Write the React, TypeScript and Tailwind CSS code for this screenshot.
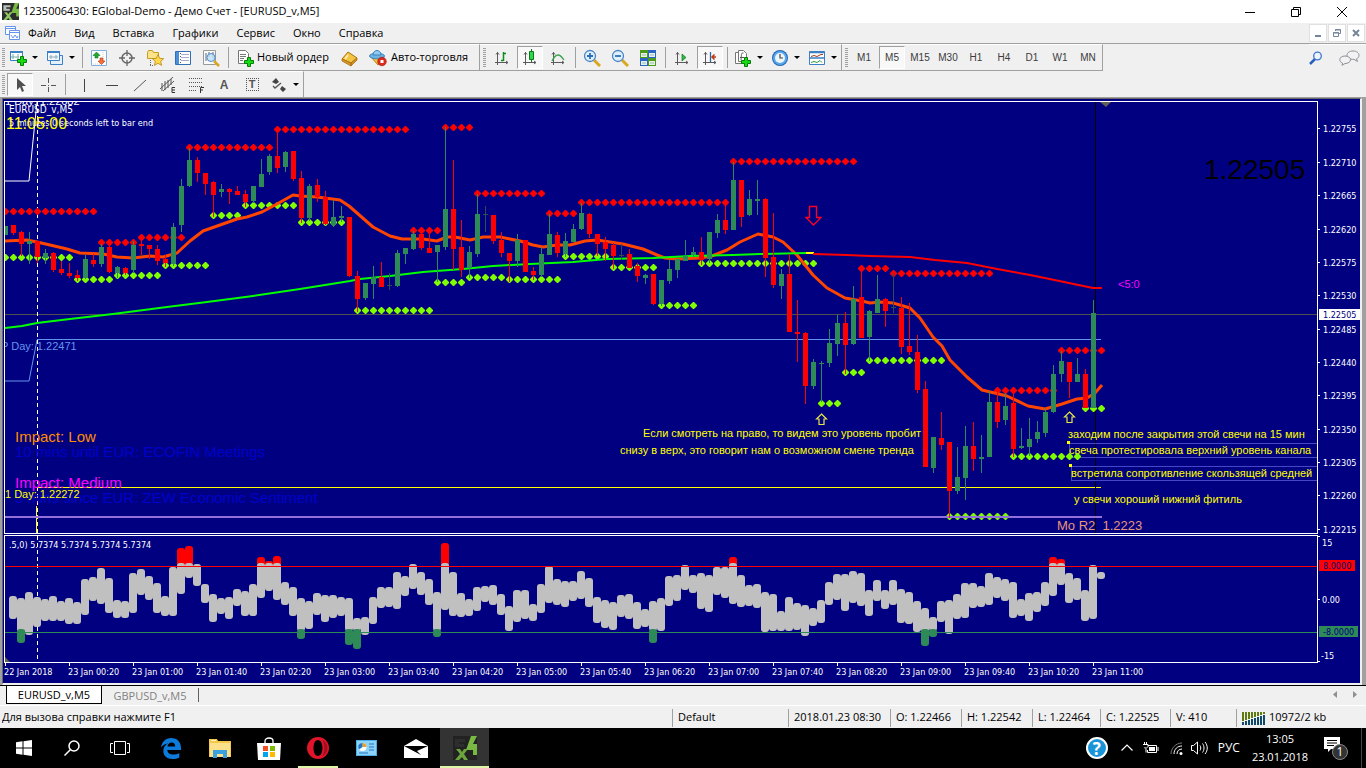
import type { ReactNode } from "react";
import clsx from "clsx";

type Candle = [high: number, top: number, bottom: number, low: number, kind: "u" | "d" | "n"];

// One entry per 5 minute bar, 8px apart
const CANDLES: Candle[] = [
  [226, 226, 235, 235, "u"], [225, 225, 233, 235, "d"], [231, 232, 244, 256, "d"], [232, 241, 244, 264, "u"],
  [241, 241, 257, 263, "d"], [249, 253, 258, 264, "u"], [252, 253, 270, 272, "d"], [261, 269, 273, 275, "d"],
  [263, 273, 276, 278, "d"], [270, 275, 278, 281, "d"], [255, 259, 278, 279, "u"], [254, 260, 264, 267, "d"],
  [244, 247, 264, 267, "u"], [246, 247, 272, 273, "d"], [266, 267, 273, 278, "u"], [267, 268, 273, 275, "d"],
  [241, 245, 270, 273, "u"], [239, 244, 246, 255, "d"], [245, 245, 249, 259, "d"], [245, 249, 261, 265, "d"],
  [255, 259, 263, 267, "d"], [223, 227, 264, 266, "u"], [179, 186, 225, 232, "u"], [148, 160, 186, 187, "u"],
  [157, 160, 173, 182, "d"], [173, 173, 184, 195, "d"], [181, 182, 195, 217, "d"], [184, 189, 192, 197, "u"],
  [188, 189, 192, 204, "d"], [186, 191, 195, 195, "d"], [190, 194, 202, 207, "d"], [186, 186, 201, 203, "u"],
  [159, 174, 187, 187, "u"], [154, 156, 172, 175, "u"], [131, 156, 168, 173, "d"], [151, 152, 167, 172, "u"],
  [151, 151, 179, 181, "d"], [171, 178, 218, 223, "d"], [184, 186, 218, 221, "u"], [179, 185, 197, 202, "d"],
  [191, 197, 224, 225, "d"], [200, 217, 225, 227, "u"], [206, 216, 218, 222, "u"], [217, 217, 276, 277, "d"],
  [271, 276, 299, 312, "d"], [283, 283, 298, 300, "u"], [266, 277, 284, 299, "u"], [262, 277, 287, 287, "d"],
  [273, 285, 286, 290, "n"], [250, 253, 286, 287, "u"], [248, 248, 254, 264, "u"], [231, 234, 249, 250, "u"],
  [232, 234, 248, 250, "d"], [231, 248, 253, 253, "d"], [245, 245, 252, 282, "u"], [127, 209, 247, 250, "u"],
  [160, 209, 249, 270, "d"], [220, 247, 270, 277, "d"], [246, 252, 268, 278, "u"], [194, 214, 254, 257, "u"],
  [206, 214, 215, 232, "n"], [215, 215, 241, 244, "d"], [232, 240, 253, 257, "d"], [253, 253, 261, 282, "d"],
  [234, 240, 261, 267, "u"], [240, 240, 272, 272, "d"], [267, 271, 275, 280, "d"], [247, 254, 275, 277, "u"],
  [214, 234, 255, 255, "u"], [232, 235, 253, 257, "d"], [233, 241, 254, 257, "u"], [224, 229, 242, 242, "u"],
  [203, 213, 229, 230, "u"], [213, 214, 234, 238, "d"], [234, 234, 244, 256, "d"], [237, 242, 249, 261, "d"],
  [243, 245, 256, 269, "d"], [244, 255, 256, 260, "n"], [249, 254, 268, 268, "d"], [263, 266, 276, 282, "d"],
  [274, 275, 278, 284, "u"], [274, 274, 304, 305, "d"], [280, 280, 304, 306, "u"], [260, 269, 281, 284, "u"],
  [259, 259, 270, 278, "u"], [240, 256, 261, 261, "u"], [247, 252, 255, 257, "u"], [237, 252, 260, 265, "d"],
  [232, 232, 259, 263, "u"], [214, 220, 233, 238, "u"], [206, 220, 230, 234, "d"], [162, 180, 230, 230, "u"],
  [180, 180, 217, 227, "d"], [190, 199, 215, 216, "u"], [180, 199, 201, 215, "u"], [198, 199, 258, 277, "d"],
  [213, 257, 285, 288, "d"], [269, 274, 286, 299, "u"], [254, 274, 332, 332, "d"], [300, 332, 334, 362, "d"],
  [332, 333, 386, 404, "d"], [359, 362, 386, 389, "u"], [361, 363, 364, 402, "u"], [329, 343, 363, 367, "u"],
  [315, 323, 344, 356, "u"], [312, 323, 345, 374, "d"], [286, 299, 344, 345, "u"], [268, 297, 338, 338, "d"],
  [310, 311, 337, 361, "u"], [275, 299, 313, 313, "u"], [298, 299, 311, 327, "d"], [273, 307, 308, 313, "n"],
  [297, 308, 347, 354, "d"], [303, 346, 352, 355, "d"], [335, 352, 390, 393, "d"], [381, 389, 467, 467, "d"],
  [437, 437, 468, 473, "u"], [412, 438, 445, 450, "d"], [442, 442, 491, 518, "d"], [447, 477, 491, 494, "u"],
  [426, 446, 478, 500, "u"], [422, 446, 459, 471, "d"], [435, 457, 459, 473, "u"], [391, 402, 457, 457, "u"],
  [392, 402, 422, 428, "d"], [393, 406, 420, 425, "u"], [394, 403, 449, 457, "d"], [428, 446, 448, 449, "u"],
  [418, 439, 447, 456, "u"], [421, 432, 439, 443, "u"], [408, 412, 433, 437, "u"], [365, 374, 412, 413, "u"],
  [351, 361, 374, 382, "u"], [362, 362, 382, 398, "d"], [358, 374, 382, 382, "u"], [369, 374, 408, 408, "d"],
  [300, 313, 408, 408, "u"],
];

const CANDLE_FILL = { u: "#2e8b57", d: "#ff0000", n: "#2f4f4f" };

// [first x, number of marks, y]
const RESISTANCE = [
  [5, 12, 211], [101, 5, 242], [141, 6, 237], [189, 11, 147], [277, 17, 129], [413, 4, 230], [445, 4, 127],
  [477, 9, 193], [549, 4, 213], [581, 19, 202], [733, 16, 161], [861, 4, 268], [893, 13, 273], [997, 8, 390],
  [1061, 6, 350],
];
const SUPPORT = [
  [5, 9, 257], [77, 5, 279], [117, 6, 275], [165, 6, 265], [213, 4, 215], [245, 7, 205], [301, 6, 222],
  [357, 10, 310], [437, 4, 282], [469, 5, 277], [509, 7, 279], [565, 6, 256], [613, 6, 267], [661, 5, 305],
  [701, 15, 263], [821, 3, 403], [845, 3, 372], [869, 10, 360], [949, 8, 516], [1013, 9, 456], [1085, 3, 408],
];

const FAST_MA =
  "5,241 27,240 37,242 50,245 67,249 80,253 103,254 117,257 133,258 150,256 163,257 177,253 190,241 203,231 220,225 237,219 247,217 262,212 277,204 293,195 300,196 317,197 340,200 349,206 365,220 373,227 390,236 402,239 423,239 437,241 447,237 455,237 470,240 483,237 500,237 520,241 533,245 543,247 557,245 570,245 585,241 597,240 623,244 643,249 657,255 665,258 677,259 700,258 712,256 727,250 740,242 758,234 773,237 783,242 797,255 813,275 827,288 845,298 862,301 870,303 880,302 893,303 910,308 920,318 933,337 942,346 950,360 960,370 967,377 982,390 1007,396 1028,406 1045,409 1062,404 1077,399 1087,398 1095,393 1102,385";
const SLOW_UP =
  "5,328 22,326 37,323 70,319 113,314 167,307 207,302 253,296 300,289 350,281 360,279 390,276 423,272 463,269 493,266 530,264 573,262 607,259 653,258 690,256 733,255 760,254 807,253";
const SLOW_DOWN =
  "813,254 847,255 870,256 910,257 935,260 967,263 997,269 1030,275 1040,277 1093,288 1102,288";

// Oscillator bars: [top, bottom, overshoot end if the bar leaves the +8/-8 band]
const OSC: number[][] = [
  [60, 83], [62, 96, 107], [56, 99], [61, 91], [63, 85], [60, 85], [65, 85], [62, 88], [66, 88], [43, 79],
  [41, 65], [32, 68], [42, 77], [64, 82], [65, 82], [37, 77], [33, 59], [40, 64], [47, 77], [60, 80],
  [31, 80], [27, 58, 12], [27, 42, 10], [28, 50], [48, 67], [58, 86], [62, 78], [61, 83], [53, 70], [55, 80],
  [48, 80], [27, 62, 21], [27, 55, 25], [27, 64, 20], [46, 69], [51, 80], [62, 95, 103], [65, 93], [57, 79], [59, 86],
  [59, 82], [61, 80], [62, 95, 109], [82, 95, 113], [81, 99], [61, 88], [51, 72], [51, 71], [36, 73], [40, 60],
  [28, 53], [36, 59], [43, 69], [56, 95, 101], [27, 74, 7], [36, 80], [57, 81], [63, 80], [51, 75], [50, 66],
  [49, 69], [58, 79], [70, 95], [54, 86], [54, 83], [68, 85], [48, 77], [30, 67], [43, 69], [45, 71],
  [45, 65], [35, 63], [42, 71], [61, 87], [64, 92], [66, 94], [59, 81], [58, 83], [66, 93], [73, 91],
  [65, 95, 107], [62, 95], [40, 70], [39, 65], [29, 54], [39, 57], [37, 73], [39, 76], [31, 59], [31, 62],
  [27, 68, 21], [39, 71], [49, 70], [48, 72], [56, 96], [58, 95], [75, 95], [61, 95], [67, 94], [69, 100],
  [72, 90], [64, 87], [46, 69], [38, 64], [38, 75], [35, 67], [37, 70], [54, 80], [44, 65], [54, 73],
  [44, 69], [53, 87], [56, 88], [65, 96], [72, 96, 110], [81, 95, 101], [65, 86], [64, 98], [58, 83], [47, 82],
  [47, 72], [50, 71], [37, 69], [41, 62], [43, 65], [46, 82], [63, 80], [57, 85], [56, 76], [46, 70],
  [27, 60, 21], [27, 49, 23], [37, 67], [42, 64], [54, 85], [29, 83], [36, 43],
];

const PRICES: [number, string][] = [
  [128, "1.22755"], [162, "1.22710"], [195, "1.22665"], [229, "1.22620"], [262, "1.22575"], [295, "1.22530"],
  [329, "1.22485"], [362, "1.22440"], [395, "1.22395"], [429, "1.22350"], [462, "1.22305"], [495, "1.22260"],
  [529, "1.22215"],
];

const TIMES = [
  "22 Jan 2018", "23 Jan 00:20", "23 Jan 01:00", "23 Jan 01:40", "23 Jan 02:20", "23 Jan 03:00", "23 Jan 03:40",
  "23 Jan 04:20", "23 Jan 05:00", "23 Jan 05:40", "23 Jan 06:20", "23 Jan 07:00", "23 Jan 07:40", "23 Jan 08:20",
  "23 Jan 09:00", "23 Jan 09:40", "23 Jan 10:20", "23 Jan 11:00",
];

const MENU = ["Файл", "Вид", "Вставка", "Графики", "Сервис", "Окно", "Справка"];
const PERIODS = ["M1", "M5", "M15", "M30", "H1", "H4", "D1", "W1", "MN"];

const AXIS_FONT = "font-['DejaVu_Sans_Condensed',sans-serif] text-[9px]";

/* ---------- small building blocks ---------- */

function Icon({ children, size = 18 }: { children: ReactNode; size?: number }) {
  return (
    <svg width={size} height={size} viewBox="0 0 18 18" fill="none" className="shrink-0">
      {children}
    </svg>
  );
}

function ToolButton({
  label,
  active,
  menu,
  children,
}: {
  label: string;
  active?: boolean;
  menu?: boolean;
  children: ReactNode;
}) {
  return (
    <button
      type="button"
      aria-label={label}
      className={clsx("flex h-6 shrink-0 items-center justify-center", menu ? "w-[37px] gap-[5px]" : "w-7")}
    >
      {active ? (
        <span className="flex h-[23px] w-[26px] items-center justify-center border border-t-[#a0a0a0] border-r-white border-b-white border-l-[#a0a0a0] bg-[#f8f8f8]">
          {children}
        </span>
      ) : (
        children
      )}
      {menu && (
        <svg width="6" height="3" className="shrink-0">
          <path d="M0 0h6L3 3z" fill="#000" />
        </svg>
      )}
    </button>
  );
}

function Grip() {
  return (
    <span className="flex h-[19px] w-[3px] shrink-0 flex-col justify-between">
      {Array.from({ length: 10 }, (_, i) => (
        <i key={i} className="block h-px w-[3px] bg-[#a0a0a0]" />
      ))}
    </span>
  );
}

function Divider() {
  return (
    <span className="flex w-[6px] shrink-0 justify-center">
      <i className="block h-[21px] w-px bg-[#a0a0a0]" />
    </span>
  );
}

function Plus({ x, y }: { x: number; y: number }) {
  return (
    <path
      transform={`translate(${x} ${y})`}
      d="M3.5.5h3v3h3v3h-3v3h-3v-3h-3v-3h3z"
      fill="#16dc16"
      stroke="#067d06"
    />
  );
}

function Axes() {
  return <path d="M4.500 3v13M2 13.500h13M3 5.500l1.500-2 1.500 2M13 12l2 1.500-2 1.500" stroke="#5a5a5a" />;
}

function Logo({ size, dark }: { size: number; dark?: boolean }) {
  return (
    <svg width={size} height={size} viewBox="0 0 24 24" className="shrink-0">
      <rect width="24" height="24" fill={dark ? "#222" : "#2c2c2c"} />
      <path d="M2 3h10v3H6v2h5v3H2z" fill={dark ? "#2e2e2e" : "#b9c0b9"} />
      <path d="M18 0h6l-4 8h4v11h-4v-5h-7z" fill="#79b843" />
      <path d="M3 13h4l2 3 2-3h4l-4 5 4 6h-4l-2-3-3 3H2l5-6z" fill={dark ? "#6aa53d" : "#8fc763"} />
    </svg>
  );
}

/* ---------- window chrome ---------- */

function TitleBar() {
  return (
    <header className="flex h-[23px] shrink-0 items-center bg-white pr-px pl-[2px]">
      <Logo size={17} />
      <h1 className="ml-1">1235006430: EGlobal-Demo - Демо Счет - [EURUSD_v,M5]</h1>
      <div className="ml-auto flex">
        <button type="button" aria-label="Свернуть" className="flex h-[23px] w-[46px] items-center justify-center">
          <svg width="10" height="10"><path d="M0 5.500h10" stroke="#000" /></svg>
        </button>
        <button type="button" aria-label="Развернуть" className="flex h-[23px] w-[46px] items-center justify-center">
          <svg width="10" height="10" fill="none" stroke="#000"><path d="M.5 2.500h7v7h-7zM2.500 2.500v-2h7v7h-2" /></svg>
        </button>
        <button type="button" aria-label="Закрыть" className="flex h-[23px] w-[46px] items-center justify-center">
          <svg width="10" height="10" stroke="#000"><path d="M0 0l10 10M10 0L0 10" /></svg>
        </button>
      </div>
    </header>
  );
}

function MenuBar() {
  return (
    <nav className="flex h-5 shrink-0 items-center pl-[5px]">
      <svg width="15" height="15" fill="#fff" stroke="#6495ed" className="mr-2">
        <path d="M.5.5h10v8H.5z" /><path d="M.5 2.500h10M4.500 4.500h10v9h-10zM4.500 6.500h10" />
        <path d="M6 9l2 3 2-3 2 3 1-2" fill="none" />
      </svg>
      <div className="flex gap-[18px]">
        {MENU.map((item) => (
          <button key={item} type="button" className="leading-5">{item}</button>
        ))}
      </div>
      <div className="ml-auto flex gap-px pr-px">
        <button type="button" aria-label="Свернуть график" className="flex size-[18px] items-center justify-center border border-[#e0e0e0] bg-white">
          <svg width="10" height="10"><path d="M2 8h6" stroke="#75869a" strokeWidth="2" /></svg>
        </button>
        <button type="button" aria-label="Восстановить график" className="flex size-[18px] items-center justify-center border border-[#e0e0e0] bg-white">
          <svg width="10" height="10" fill="none" stroke="#75869a"><path d="M1.500 4.500h5v4h-5zM1 5h6M3.500 3V1.500h5v4H7M3 2h6" /></svg>
        </button>
        <button type="button" aria-label="Закрыть график" className="flex size-[18px] items-center justify-center border border-[#e0e0e0] bg-white">
          <svg width="10" height="10"><path d="M2 2l6 6M8 2L2 8" stroke="#75869a" strokeWidth="2" /></svg>
        </button>
      </div>
    </nav>
  );
}

function MainToolbar() {
  return (
    <div className="flex h-7 shrink-0 border-t border-[#a0a0a0]">
      <div className="flex items-center border-t border-r border-b border-t-white border-r-[#a0a0a0] border-b-[#a0a0a0] pl-[2px]">
        <Grip />
        <div className="flex items-center">
          <ToolButton label="Новый график" menu>
            <Icon>
              <path d="M1.500 2.500h12v9h-12z" fill="#fff" stroke="#3b7fc4" /><path d="M1 3h13" stroke="#3b7fc4" strokeWidth="2" />
              <path d="M4 5v5M9 5v5M2 8h8" stroke="#7aa" />
              <Plus x={8} y={7} />
            </Icon>
          </ToolButton>
          <ToolButton label="Профили" menu>
            <Icon>
              <path d="M4.500 6.500h12v9h-12z" fill="#e4f0fb" stroke="#3b7fc4" />
              <path d="M1.500 2.500h12v9h-12z" fill="#f4f9fe" stroke="#3b7fc4" /><path d="M1 3h13" stroke="#3b7fc4" strokeWidth="2" />
              <path d="M3 8h9M5 6v4M10 6v4" stroke="#8ab" />
            </Icon>
          </ToolButton>
        </div>
        <Divider />
        <ToolButton label="Обзор рынка">
          <Icon>
            <path d="M1.500 1.500h15v15h-15z" fill="#fff" stroke="#7fb0e0" /><path d="M13 3v12M3 15h10" stroke="#ccc" strokeDasharray="1 1" />
            <path d="M6.500 3l3.500 3.500H8V9H5V6.500H3z" fill="#1fa82f" stroke="#0b7a18" strokeWidth=".6" />
            <path d="M11.500 15.500L8 12h2V9h3v3h2z" fill="#f2703a" stroke="#b83a0b" strokeWidth=".6" />
          </Icon>
        </ToolButton>
        <ToolButton label="Окно данных">
          <Icon>
            <circle cx="9" cy="9" r="5" stroke="#666" strokeWidth="1.500" /><path d="M9 1v6M9 11v6M1 9h6M11 9h6" stroke="#666" strokeWidth="1.300" />
          </Icon>
        </ToolButton>
        <ToolButton label="Навигатор">
          <Icon>
            <path d="M1.500 3.500l1-2h4l1 2h5v6h-11z" fill="#fbe38a" stroke="#c79a20" /><path d="M4.500 11v6M4 16.500h4" stroke="#666" strokeDasharray="1 1" />
            <path d="M12 5.500l1.700 3.800 4 .4-3 2.700.9 4-3.600-2.100-3.600 2.100.9-4-3-2.700 4-.4z" fill="#ffd94a" stroke="#b98512" strokeWidth=".8" />
          </Icon>
        </ToolButton>
        <ToolButton label="Терминал">
          <Icon>
            <path d="M1.500 2.500h15v13h-15z" fill="#fff" stroke="#2f6fb5" /><path d="M2 3h3v12H2z" fill="#4a90d9" />
            <path d="M7 5.500h8M7 8.500h8M7 11.500h8" stroke="#aac" /><path d="M6.500 4v10" stroke="#555" strokeDasharray="1 2" />
          </Icon>
        </ToolButton>
        <ToolButton label="Тестер стратегий">
          <Icon>
            <path d="M1.500 1.500h12v14h-12z" fill="#fafafa" stroke="#999" /><path d="M4 4v8M7 3v5M11 3v6" stroke="#666" />
            <circle cx="9" cy="8.500" r="4" fill="#bfe0f8cc" stroke="#4a90d9" /><path d="M12 12l5 5" stroke="#d9a520" strokeWidth="2.500" />
          </Icon>
        </ToolButton>
        <Divider />
        <button type="button" className="ml-px flex h-6 w-[104px] items-center gap-[2px] pl-[5px] whitespace-nowrap">
          <Icon>
            <path d="M1.500 1.500h7l3 3v10h-10z" fill="#fff" stroke="#777" /><path d="M3 5.500h6M3 7.500h6M3 9.500h4M3 11.500h3" stroke="#777" />
            <Plus x={7} y={8} />
          </Icon>
          Новый ордер
        </button>
        <ToolButton label="MetaEditor">
          <Icon>
            <path d="M1 10l6-7 9 6-6 5z" fill="#f4c542" stroke="#a8700f" /><path d="M1 10v2l9 5v-3zM16 9v2l-6 6v-3z" fill="#d9962a" stroke="#a8700f" strokeWidth=".8" />
            <path d="M4 10l3-4" stroke="#fff3b0" strokeWidth="1.500" />
          </Icon>
        </ToolButton>
        <button type="button" className="flex h-6 w-[115px] items-center gap-1 pl-[5px] whitespace-nowrap">
          <Icon>
            <path d="M2 8l7 8 6-8z" fill="#f2c438" stroke="#b5841a" /><ellipse cx="8" cy="7" rx="7.500" ry="2.800" fill="#6cb4e4" stroke="#3c83b8" />
            <path d="M4 6c0-6 8-6 8 0z" fill="#8fcbf2" stroke="#3c83b8" />
            <circle cx="13" cy="12.500" r="4.300" fill="#dd2a1c" stroke="#a01208" strokeWidth=".6" /><path d="M11.500 11h3v3h-3z" fill="#fff" />
          </Icon>
          Авто-торговля
        </button>
      </div>

      <div className="flex items-center border-t border-r border-b border-t-white border-r-[#a0a0a0] border-b-[#a0a0a0] pl-[3px]">
        <Grip />
        <div className="w-[2px]" />
        <ToolButton label="Бары">
          <Icon><Axes /><path d="M10.500 3v9M10.500 4.500H13M8 11.500h2.500" stroke="#0c8a1c" strokeWidth="1.500" /></Icon>
        </ToolButton>
        <ToolButton label="Свечи" active>
          <Icon><Axes /><path d="M10.500 0v13" stroke="#0c7a1c" /><path d="M8.500 2.500h4v8h-4z" fill="#2fd84a" stroke="#0c7a1c" /></Icon>
        </ToolButton>
        <ToolButton label="Линия">
          <Icon><Axes /><path d="M3 12c2-4 4-6 6-6s4 2 6 5" stroke="#3da34d" strokeWidth="1.300" /></Icon>
        </ToolButton>
        <Divider />
        <ToolButton label="Увеличить">
          <Icon><path d="M11 11l6 6" stroke="#d8a820" strokeWidth="3" /><circle cx="7" cy="7" r="5.500" fill="#dff0fc" stroke="#4a86c5" strokeWidth="1.300" /><path d="M4 7h6M7 4v6" stroke="#2f70b5" strokeWidth="1.800" /></Icon>
        </ToolButton>
        <ToolButton label="Уменьшить">
          <Icon><path d="M11 11l6 6" stroke="#d8a820" strokeWidth="3" /><circle cx="7" cy="7" r="5.500" fill="#dff0fc" stroke="#4a86c5" strokeWidth="1.300" /><path d="M4 7h6" stroke="#2f70b5" strokeWidth="1.800" /></Icon>
        </ToolButton>
        <ToolButton label="Плитка">
          <Icon>
            <path d="M1 1h8v8H1zM9 9h8v8H9z" fill="#4c9a1c" /><path d="M9 1h8v8H9zM1 9h8v8H1z" fill="#2a66c8" />
            <path d="M2 4h6v4H2zM10 4h6v4h-6zM2 12h6v4H2zM10 12h6v4h-6z" fill="#e8f2e0" /><path d="M3 6h4M11 6h4M3 14h4M11 14h4" stroke="#9bc" />
          </Icon>
        </ToolButton>
        <Divider />
        <ToolButton label="Автопрокрутка">
          <Icon><Axes /><path d="M9 5l4 3.500L9 12z" fill="#2fb84a" stroke="#0c7a1c" strokeWidth=".7" /></Icon>
        </ToolButton>
        <ToolButton label="Сдвиг графика" active>
          <Icon><Axes /><path d="M9.500 3v10" stroke="#2a66a8" strokeWidth="1.300" /><path d="M15 8h-4M13.500 5.500L11 8l2.500 2.500" stroke="#c03a10" strokeWidth="1.500" /></Icon>
        </ToolButton>
        <Divider />
        <ToolButton label="Индикаторы" menu>
          <Icon>
            <path d="M1.500 3.500h9v11h-9z" fill="#fff" stroke="#777" /><path d="M4.500 1.500h5l3 3v8h-8z" fill="#fff" stroke="#777" /><path d="M6 8.500h4M9.500 4C7 3.500 7.500 6 7 11" stroke="#555" />
            <Plus x={7} y={8} />
          </Icon>
        </ToolButton>
        <ToolButton label="Периоды" menu>
          <Icon><circle cx="9" cy="9" r="8" fill="#1f66b8" /><circle cx="9" cy="9" r="7" fill="#5aa6ea" /><circle cx="9" cy="9" r="5" fill="#eef6fd" /><path d="M9 5v4h3" stroke="#444" strokeWidth="1.200" /></Icon>
        </ToolButton>
        <ToolButton label="Шаблоны" menu>
          <Icon>
            <path d="M1.500 2.500h15v13h-15z" fill="#fff" stroke="#3b7fc4" /><path d="M1 3.500h16M1 9h16" stroke="#3b7fc4" strokeWidth="1.500" />
            <path d="M3 7.500l3-1 3 1 4-2 2 0" stroke="#a33a1c" /><path d="M3 13.500l3-1 3 1 3-2 2 2" stroke="#2f9a3c" />
          </Icon>
        </ToolButton>
      </div>

      <div className="flex items-center border-t border-r border-b border-t-white border-r-[#a0a0a0] border-b-[#a0a0a0] pl-[3px]">
        <Grip />
        <div className="w-[2px]" />
        {PERIODS.map((p) => (
          <ToolButton key={p} label={p} active={p === "M5"}>
            <span className="font-['Liberation_Sans',sans-serif] text-[10px] text-[#3c3c3c]">{p}</span>
          </ToolButton>
        ))}
      </div>

      <div className="ml-auto flex items-center gap-4 border-t border-white pr-[6px]">
        <button type="button" aria-label="Поиск">
          <svg width="14" height="14" fill="none"><path d="M1 13l5-5" stroke="#2a5fc0" strokeWidth="2.500" /><circle cx="8.500" cy="5" r="3.800" fill="#eef4fc" stroke="#3b74d0" strokeWidth="1.300" /></svg>
        </button>
        <button type="button" aria-label="Сообщения">
          <svg width="21" height="16" fill="#f2f2f4" stroke="#8f8f96">
            <path d="M14 1c3.500 0 6 1.800 6 4.200 0 1.800-1 3-2.500 3.600l1 2.700-3.500-2.200C10.500 9.500 8 8 8 5.200 8 2.800 10.500 1 14 1z" />
            <path d="M6 6c3 0 5.500 1.500 5.500 3.800S9 13.500 6 13.500l-3 1.800.5-2.300C1.800 12.300.8 11.200.8 9.800.8 7.500 3 6 6 6z" />
          </svg>
        </button>
      </div>
    </div>
  );
}

function DrawingToolbar() {
  return (
    <div className="flex h-[26px] shrink-0">
      <div className="flex items-center border-t border-r border-t-white border-r-[#a0a0a0] pl-[2px]">
        <Grip />
        <div className="w-px" />
        <ToolButton label="Курсор" active>
          <Icon><path d="M6 2v12l3-3 2 5 2-1-2-5h4z" fill="#505050" /></Icon>
        </ToolButton>
        <ToolButton label="Перекрестие">
          <Icon><path d="M9.500 2v5M9.500 11v5M2 9.500h5M12 9.500h5M9 9.500h1" stroke="#555" /></Icon>
        </ToolButton>
        <Divider />
        <div className="w-[2px]" />
        <ToolButton label="Вертикальная линия">
          <Icon><path d="M9.500 3v13" stroke="#444" /></Icon>
        </ToolButton>
        <ToolButton label="Горизонтальная линия">
          <Icon><path d="M3 9.500h12" stroke="#444" /></Icon>
        </ToolButton>
        <ToolButton label="Трендовая линия">
          <Icon><path d="M3 15L15 4" stroke="#555" /></Icon>
        </ToolButton>
        <ToolButton label="Равноудаленный канал">
          <Icon>
            <path d="M1 13L14 1M4 15L15 5M3 7v8M6 5v9M9 4v8M12 3v6" stroke="#555" /><path d="M16 11.500h-3v5h3M13 14h3" stroke="#333" />
          </Icon>
        </ToolButton>
        <ToolButton label="Линии Фибоначчи">
          <Icon>
            <path d="M2 2.500h14M2 6.500h14M2 10.500h14M2 14.500h8" stroke="#555" strokeDasharray="1 1" /><path d="M13.500 17v-5.500H17M13 14h3" stroke="#333" />
          </Icon>
        </ToolButton>
        <ToolButton label="Текст">
          <span className="font-['Liberation_Sans',sans-serif] text-[12px] font-bold text-[#555]">A</span>
        </ToolButton>
        <ToolButton label="Текстовая метка">
          <span className="flex size-[13px] items-center justify-center border border-dotted border-[#555] font-['Liberation_Sans',sans-serif] text-[11px] leading-none font-bold text-[#555]">
            T
          </span>
        </ToolButton>
        <ToolButton label="Стрелки" menu>
          <Icon>
            <path d="M6 2l3 4-3 2-4-2zM12 10l4 3-3 3-3-3z" fill="#444" /><path d="M3 10l2 2 6-5" stroke="#555" strokeWidth="1.300" />
          </Icon>
        </ToolButton>
      </div>
    </div>
  );
}

/* ---------- chart ---------- */

function Marks({ rows, fill }: { rows: number[][]; fill: string }) {
  return (
    <g fill={fill}>
      {rows.flatMap(([x, count, y]) =>
        Array.from({ length: count }, (_, i) => (
          <path key={`${x}-${y}-${i}`} d={`M${x + i * 8 - 3} ${y}l3-3h1l3 3v1l-3 3h-1l-3-3z`} />
        )),
      )}
    </g>
  );
}

function PriceChart() {
  return (
    <svg width="100%" height="100%" className="absolute inset-0 font-['Liberation_Sans',sans-serif] text-[11px]">
      <g transform="translate(-5 -102)">
        {/* levels */}
        <rect x="5" y="314" width="1400" height="1" fill="#4f4f4f" />
        <rect x="37" y="339" width="1064" height="1" fill="#6495ed" />
        <rect x="37" y="487" width="1064" height="1" fill="#ffff00" />
        <rect x="36" y="506" width="1" height="27" fill="#ffff00" />
        <path d="M5 381h24l8-41" fill="none" stroke="#6495ed" />
        <path d="M5 181h24l4-40 4-39" fill="none" stroke="#fff" />
        <path d="M37 102v500" transform="translate(.5 0)" stroke="#fff" strokeDasharray="4 3" />
        <rect x="1095" y="102" width="1" height="431" fill="#000" />

        <text x="5" y="105" fill="#fff">1 Day: 1.22682</text>
        <text x="9" y="113" fill="#fff" className="font-['DejaVu_Sans_Condensed',sans-serif] text-[10px]">EURUSD_v,M5</text>
        <text x="9" y="126" fill="#fff" className={AXIS_FONT}>5 minutes 0 seconds left to bar end</text>
        <text x="6" y="129" fill="#ffff00" className="text-[16px]">11:05:00</text>
        <text x="1" y="350" fill="#6495ed">P Day: 1.22471</text>
        <text x="15" y="457" fill="#0000cd" className="text-[15px]">10 mins until EUR: ECOFIN Meetings</text>
        <text x="15" y="503" fill="#0000cd" className="text-[15px]">5 mins since EUR: ZEW Economic Sentiment</text>
        <text x="15" y="442" fill="#ff8c00" className="text-[15px]">Impact: Low</text>
        <text x="15" y="488" fill="#ff00ff" className="text-[15px]">Impact: Medium</text>
        <text x="5" y="498" fill="#ffff00">1 Day: 1.22272</text>
        <text x="1204" y="179" fill="#000" className="text-[28px]">1.22505</text>
        <text x="1118" y="288" fill="#ff00ff">&lt;5:0</text>
        <text x="1057" y="530" fill="#e9967a" className="text-[13px]" xmlSpace="preserve">Mo R2  1.2223</text>

        <g fill="none" stroke="#4646c8" shapeRendering="crispEdges">
          <rect x="1069" y="443" width="260" height="14" />
          <rect x="1071" y="466" width="246" height="14" />
        </g>
        <g fill="#ffff00">
          <text x="643" y="437">Если смотреть на право, то видем это уровень пробит</text>
          <text x="620" y="454">снизу в верх, это говорит нам о возможном смене тренда</text>
          <text x="1068" y="438">заходим после закрытия этой свечи на 15 мин</text>
          <text x="1069" y="454">свеча протестировала верхний уровень канала</text>
          <text x="1071" y="477">встретила сопротивление скользящей средней</text>
          <text x="1074" y="503">у свечи хороший нижний фитиль</text>
          <rect x="1067" y="441" width="3" height="3" />
          <rect x="1069" y="464" width="3" height="3" />
        </g>

        {/* indicators */}
        <Marks rows={RESISTANCE} fill="#ff0000" />
        <Marks rows={SUPPORT} fill="#7fff00" />
        <rect x="5" y="516" width="1097" height="2" fill="#9370db" />
        <g fill="none" strokeLinejoin="round">
          <polyline points={FAST_MA} stroke="#ff4500" strokeWidth="3" />
          <polyline points={SLOW_UP} stroke="#00ff00" strokeWidth="2" />
          <path d="M806 253h8" stroke="#ffff00" strokeWidth="2" />
          <polyline points={SLOW_DOWN} stroke="#ff0000" strokeWidth="2" />
        </g>

        <g shapeRendering="crispEdges">
          {CANDLES.map(([high, top, bottom, low, kind], i) => (
            <g key={i} fill={CANDLE_FILL[kind]}>
              <rect x={5 + i * 8} y={high} width="1" height={low - high} />
              <rect x={3 + i * 8} y={top} width="5" height={bottom - top} />
            </g>
          ))}
        </g>

        {/* signal arrows */}
        <path d="M809.500 206.500h7v11h4.500l-7.500 7.500-7.500-7.500h3.500z" fill="none" stroke="#ff0020" strokeWidth="1.300" />
        {[[821, 413], [1069, 411]].map(([x, y]) => (
          <path key={x} transform={`translate(${x} ${y})`} d="M.5 1l5 5H3v5.500h-5V6h-2.500z" fill="none" stroke="#e6e64a" strokeWidth="1.200" />
        ))}
        <path d="M1100 102h11l-5 5z" fill="#5f5f55" />
      </g>
    </svg>
  );
}

function PriceAxis() {
  return (
    <svg className={clsx("w-[42px] shrink-0 self-stretch", AXIS_FONT)} fill="#fff">
      <g transform="translate(-1318 -101)">
        {PRICES.map(([y, label]) => (
          <g key={label}>
            <rect x="1318" y={y} width="2" height="1" />
            <text x="1323" y={y + 4}>{label}</text>
          </g>
        ))}
        <rect x="1319" y="309" width="41" height="11" />
        <text x="1323" y="318" fill="#000080">1.22505</text>
      </g>
    </svg>
  );
}

function Oscillator() {
  return (
    <svg width="100%" height="100%" className={clsx("absolute inset-0", AXIS_FONT)}>
      <g transform="translate(-5 0)">
        <path d="M37 0v127" transform="translate(.5 0)" stroke="#fff" strokeDasharray="4 3" />
        {OSC.map(([top, bottom, peak], i) => {
          const x = 9 + i * 8;
          return (
            <g key={i}>
              {peak < top && <rect x={x} y={peak} width="8" height={40 - peak} rx="3" fill="#ff0000" />}
              <rect x={x} y={top} width="8" height={bottom - top} rx="3" fill="#c0c0c0" />
              {peak > bottom && <rect x={x} y="93" width="8" height={peak - 93} rx="3" fill="#2e8b57" />}
            </g>
          );
        })}
        <rect x="5" y="30" width="1400" height="1" fill="#ff0000" />
        <rect x="5" y="96" width="1400" height="1" fill="#2e8b57" />
        <text x="9" y="12" fill="#fff">.5,0) 5.7374 5.7374 5.7374 5.7374</text>
        <path d="M5 121v6h6z" fill="#5f5f55" />
      </g>
    </svg>
  );
}

function ChartWindow() {
  return (
    <main className="flex min-h-0 flex-1 border-t border-[#a0a0a0] bg-[#a0a0a0] pr-1 pl-[2px]">
      <div className="flex min-w-0 flex-1 border-t border-r-2 border-b-2 border-l border-t-[#696969] border-r-[#f0f0f0] border-b-[#f0f0f0] border-l-[#696969]">
        <div className="flex min-w-0 flex-1 flex-col bg-[#000080] pt-[2px] pl-px">
          <section className="flex min-h-0 flex-1">
            <div className="relative min-w-0 flex-1 border border-white">
              <PriceChart />
            </div>
            <PriceAxis />
          </section>
          <section className="mt-px flex h-32 shrink-0">
            <div className="relative min-w-0 flex-1 border border-white">
              <Oscillator />
            </div>
            <svg className={clsx("h-32 w-[42px] shrink-0", AXIS_FONT)} fill="#fff">
              <rect x="0" y="1" width="2" height="1" /><rect x="0" y="64" width="2" height="1" /><rect x="0" y="126" width="2" height="1" />
              <text x="4" y="11">15</text>
              <text x="4" y="68">0.00</text>
              <text x="3" y="124">-15</text>
              <rect x="1" y="25" width="36" height="11" fill="#ff0000" />
              <text x="5" y="34" fill="#000080">8.0000</text>
              <rect x="1" y="91" width="39" height="11" fill="#2e8b57" />
              <text x="5" y="100" fill="#000080">-8.0000</text>
            </svg>
          </section>
          <div className={clsx("flex h-5 shrink-0 overflow-hidden text-white", AXIS_FONT)}>
            {TIMES.map((t) => (
              <span key={t} className="flex w-16 shrink-0 flex-col whitespace-nowrap">
                <i className="ml-px block h-[3px] w-px bg-white" />
                <span className="leading-[12px]">{t}</span>
              </span>
            ))}
          </div>
        </div>
      </div>
    </main>
  );
}

/* ---------- bottom ---------- */

function ChartTabs() {
  return (
    <div className="flex h-[21px] shrink-0 items-start border-t border-b border-t-black border-b-white pl-[6px]">
      <button type="button" className="h-[18px] w-24 border-r border-b border-l border-black bg-white leading-[17px]">
        EURUSD_v,M5
      </button>
      <button type="button" className="h-[18px] w-24 leading-[17px] text-[#808080]">GBPUSD_v,M5</button>
      <i className="mt-[2px] block h-[14px] w-px bg-[#606060]" />
      <div className="ml-auto flex gap-4 pt-[5px] pr-[9px]">
        <button type="button" aria-label="Назад"><svg width="4" height="7"><path d="M4 0v7L0 3.500z" fill="#909090" /></svg></button>
        <button type="button" aria-label="Вперед"><svg width="4" height="7"><path d="M0 0v7l4-3.500z" fill="#909090" /></svg></button>
      </div>
    </div>
  );
}

function StatusCell({ className, children }: { className: string; children: ReactNode }) {
  return (
    <div className={clsx("flex h-[18px] shrink-0 items-center border-l border-[#a0a0a0] pl-[5px] whitespace-nowrap", className)}>
      {children}
    </div>
  );
}

function StatusBar() {
  return (
    <footer className="flex h-[22px] shrink-0 items-center pt-px pl-[2px]">
      <p className="min-w-0 flex-1 truncate">Для вызова справки нажмите F1</p>
      <StatusCell className="w-[116px]">Default</StatusCell>
      <StatusCell className="w-[102px]">2018.01.23 08:30</StatusCell>
      <StatusCell className="w-[71px]">O: 1.22466</StatusCell>
      <StatusCell className="w-[71px]">H: 1.22542</StatusCell>
      <StatusCell className="w-[68px]">L: 1.22464</StatusCell>
      <StatusCell className="w-[70px]">C: 1.22525</StatusCell>
      <StatusCell className="w-[66px]">V: 410</StatusCell>
      <StatusCell className="w-[130px] gap-1">
        <svg width="23" height="14">
          {Array.from({ length: 8 }, (_, i) => (
            <g key={i}>
              <rect x={i * 3} y="1" width="2" height={9 - i} fill="#5f7a10" />
              <rect x={i * 3} y={11 - i} width="2" height={3 + i} fill="#0f4a6a" />
            </g>
          ))}
        </svg>
        10972/2 kb
      </StatusCell>
    </footer>
  );
}

function TaskButton({ label, active, open, children }: { label: string; active?: boolean; open?: boolean; children: ReactNode }) {
  return (
    <button
      type="button"
      aria-label={label}
      className={clsx("flex h-10 w-[49px] shrink-0 flex-col items-center", active && "bg-[#333]")}
    >
      <span className="flex h-[38px] items-center pt-[2px]">{children}</span>
      {(active || open) && <i className={clsx("block h-[2px] bg-[#dff5a8]", active ? "w-full" : "w-10")} />}
    </button>
  );
}

function Taskbar() {
  return (
    <div className="flex h-10 shrink-0 items-center bg-black text-white">
      <button type="button" aria-label="Пуск" className="flex w-12 justify-center">
        <svg width="16" height="16" fill="#fff"><path d="M0 2.200L6.500 1.300v6.200H0zM7.500 1.200L16 0v7.500H7.500zM0 8.500h6.500v6.200L0 13.800zM7.500 8.500H16V16l-8.500-1.200z" /></svg>
      </button>
      <button type="button" aria-label="Поиск в Windows" className="flex w-12 justify-center">
        <svg width="16" height="16" fill="none" stroke="#fff" strokeWidth="1.500"><circle cx="10" cy="6" r="5" /><path d="M6.500 9.500L.5 15.500" /></svg>
      </button>
      <button type="button" aria-label="Представление задач" className="mr-[2px] flex w-12 justify-center">
        <svg width="20" height="16" fill="none" stroke="#fff"><path d="M4.500 1.500h11v13h-11zM3 3.500H.5v9H3M17 3.500h2.500v9H17" /></svg>
      </button>
      <TaskButton label="Edge">
        <svg width="20" height="21" viewBox="0 0 20 21">
          <path d="M0 9.500C.8 4 4.500 0 10.300 0 16 0 20 4 20 9.800V12H6.300c.2 3 2.700 4.600 6 4.600 2.300 0 4.300-.6 6-1.700v4.500C16.500 20.500 14 21 11.300 21 6 21 2.300 17.800 2.300 13c0-3.500 1.800-6 4.700-7.500C4.200 5.900 1.500 7.200 0 9.500zM6.500 8.500h7.700c0-2.500-1.300-4-3.600-4C8.200 4.500 6.700 6.200 6.500 8.500z" fill="#0c7bdc" />
        </svg>
      </TaskButton>
      <TaskButton label="Проводник">
        <svg width="22" height="19"><path d="M0 2V0h8l1 2h13v16H0z" fill="#f5c84c" /><path d="M1 4h20v14H1z" fill="#fde08a" /><path d="M2 1h5v1H2z" fill="#fff3c4" /><path d="M4 19v-8h14v8h-4v-4H8v4z" fill="#3aa0e0" /></svg>
      </TaskButton>
      <TaskButton label="Магазин">
        <svg width="24" height="23">
          <path d="M8 6V4c0-4 8-4 8 0v2" fill="none" stroke="#fff" strokeWidth="1.300" /><path d="M0 6h24l-1 17H1z" fill="#fff" />
          <path d="M6 9h5v5H6z" fill="#f25022" /><path d="M13 9h5v5h-5z" fill="#7fba00" /><path d="M6 15h5v5H6z" fill="#00a4ef" /><path d="M13 15h5v5h-5z" fill="#ffb900" />
        </svg>
      </TaskButton>
      <TaskButton label="Opera" open>
        <svg width="22" height="22"><path fillRule="evenodd" d="M11 0a11 11 0 100 22 11 11 0 000-22zm0 3c2.800 0 4.500 3.600 4.500 8S13.800 19 11 19s-4.500-3.600-4.500-8S8.200 3 11 3z" fill="#e0142a" /><path d="M15 2.500c4 2 5.500 5 5.500 8.500s-1.500 6.500-5.500 8.500c3-3.500 3-13.500 0-17z" fill="#a30d1e" /></svg>
      </TaskButton>
      <TaskButton label="Панель управления">
        <svg width="21" height="16"><path d="M0 0h21v16H0z" fill="#4ab0ea" /><path d="M1 1h19v14H1z" fill="#8ed2f6" /><circle cx="6.500" cy="7" r="4" fill="#fff" /><path d="M6.500 3a4 4 0 014 4h-4z" fill="#f0a020" /><path d="M6.500 7L3 9.500a4 4 0 013.500-6.500z" fill="#1e78c8" /><path d="M13 4h5M13 7h5M13 10h5M3 13h9" stroke="#1e78c8" /></svg>
      </TaskButton>
      <TaskButton label="Почта">
        <svg width="24" height="19"><path d="M0 7l12-7 12 7v12H0z" fill="#fff" /><path d="M0 7h24l-11 5 4 4z" fill="#000" /></svg>
      </TaskButton>
      <TaskButton label="MetaTrader" active>
        <Logo size={24} dark />
      </TaskButton>

      <div className="ml-auto flex h-10 items-center">
        <button type="button" aria-label="Справка Windows" className="mr-[13px]">
          <span className="flex size-[22px] items-center justify-center rounded-full border-2 border-white bg-[#1a94d8] text-[17px] leading-none font-bold">?</span>
        </button>
        <button type="button" aria-label="Скрытые значки" className="mr-[9px]">
          <svg width="12" height="8" fill="none" stroke="#fff" strokeWidth="1.200"><path d="M.5 6.500l5.500-5.500 5.500 5.500" /></svg>
        </button>
        <button type="button" aria-label="Батарея" className="mr-[11px]">
          <svg width="17" height="12" fill="none" stroke="#fff"><path d="M6 3.500h8.500v7h-9V8M16 5v4M2.500 0v2M4.500 0v2M1 2.500h5v2L4 6.500v4M3 5v1.500" /><path d="M7 5h6v4H7z" fill="#fff" stroke="none" /></svg>
        </button>
        <button type="button" aria-label="Сеть" className="mr-2">
          <svg width="13" height="13" fill="none" stroke="#fff"><path d="M1 12C1 6 6 1 12 1" stroke="#777" /><path d="M4 12c0-5 3.500-8 8-8M7 12c0-3 2-5 5-5" /><circle cx="11" cy="11.500" r="1.500" fill="#fff" stroke="none" /></svg>
        </button>
        <button type="button" aria-label="Громкость" className="mr-[10px]">
          <svg width="17" height="14" fill="none" stroke="#fff"><path d="M.5 4.500h2l4-3.500v12l-4-3.500h-2zM9 4.500c1 1.500 1 3.500 0 5M11.500 2.500c2 2.500 2 6.500 0 9M14 1c3 3.500 3 8.500 0 12" /></svg>
        </button>
        <button type="button" className="mr-3 text-[12px]">РУС</button>
        <div className="mr-4 text-center leading-[18px]">
          <p>13:05</p>
          <p>23.01.2018</p>
        </div>
        <button type="button" aria-label="Уведомления" className="mr-3 flex">
          <svg width="25" height="25">
            <path d="M0 1h16v12H7l-3 3v-3H0z" fill="#fff" /><path d="M3 4.500h10M3 7h10M3 9.500h7" stroke="#000" />
            <circle cx="16" cy="16" r="7.500" fill="#333" stroke="#888" />
            <text x="16" y="20" textAnchor="middle" fill="#fff" fontSize="12">1</text>
          </svg>
        </button>
        <i className="mr-1 block h-10 w-px bg-[#444]" />
      </div>
    </div>
  );
}

export default function App() {
  return (
    <div className="flex h-screen flex-col overflow-hidden bg-[#f0f0f0] font-['Open_Sans',sans-serif] text-[11px] text-black">
      <TitleBar />
      <MenuBar />
      <MainToolbar />
      <DrawingToolbar />
      <ChartWindow />
      <ChartTabs />
      <StatusBar />
      <Taskbar />
    </div>
  );
}
